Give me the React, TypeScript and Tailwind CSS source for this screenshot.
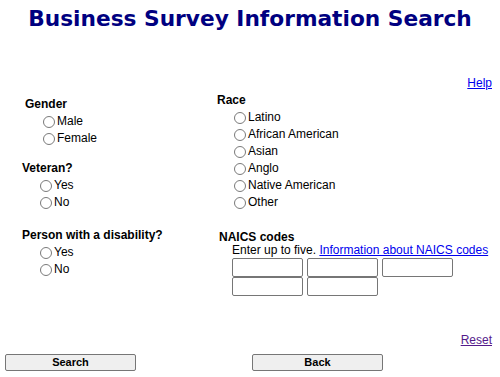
import React from "react";

function Radio({ name, label }: { name: string; label: string }) {
    return (
        <label className="flex items-center h-[17px]">
            <input
                type="radio"
                name={name}
                className="appearance-none w-[12px] h-[12px] ml-[1px] mr-[2px] shrink-0 rounded-full border border-[#7a7a7a] bg-white checked:border-[4px] checked:border-[#0075ff]"
            />
            <span>{label}</span>
        </label>
    );
}

export default function App() {
    const races = ["Latino", "African American", "Asian", "Anglo", "Native American", "Other"];

    return (
        <div className="w-[500px] h-[377px] bg-white text-black text-[12px] leading-[17px] font-['Liberation_Sans',Arial,sans-serif]">
            <h1 className="pt-[5px] text-center text-[21.7px] leading-[28px] font-bold text-[#000080] font-['DejaVu_Sans',Verdana,sans-serif]">
                Business Survey Information Search
            </h1>

            <div className="mt-[42px] flex justify-end pr-[8px]">
                <a href="#" className="underline text-[#0000ee]">Help</a>
            </div>

            <div className="flex">
                {/* left column */}
                <div className="w-[217px] pl-[22px] pt-[4px]">
                    <div className="pl-[3px]">
                        <div className="font-bold">Gender</div>
                        <div className="pl-[17px]">
                            <Radio name="gender" label="Male" />
                            <Radio name="gender" label="Female" />
                        </div>
                    </div>

                    <div className="mt-[13px]">
                        <div className="font-bold">Veteran?</div>
                        <div className="pl-[17px]">
                            <Radio name="veteran" label="Yes" />
                            <Radio name="veteran" label="No" />
                        </div>
                    </div>

                    <div className="mt-[16px]">
                        <div className="font-bold">Person with a disability?</div>
                        <div className="pl-[17px]">
                            <Radio name="disability" label="Yes" />
                            <Radio name="disability" label="No" />
                        </div>
                    </div>
                </div>

                {/* right column */}
                <div className="flex-1">
                    <div className="font-bold">Race</div>
                    <div className="pl-[16px]">
                        {races.map(r => (
                            <Radio key={r} name="race" label={r} />
                        ))}
                    </div>

                    <div className="mt-[19px] pl-[2px]">
                        <div className="font-bold leading-[14px]">NAICS codes</div>
                        <div className="pl-[13px] leading-[12px]">
                            Enter up to five.{" "}
                            <a href="#" className="underline text-[#0000ee]">Information about NAICS codes</a>
                        </div>
                        <div className="pl-[13px] mt-[2px] grid grid-cols-[71px_71px_71px] gap-x-[4px] w-max">
                            {[0, 1, 2, 3, 4].map(i => (
                                <input
                                    key={i}
                                    type="text"
                                    className="w-[71px] h-[19px] bg-white border border-[#767676] rounded-[2px]"
                                />
                            ))}
                        </div>
                    </div>
                </div>
            </div>

            <div className="mt-[36px] flex justify-end pr-[8px]">
                <a href="#" className="underline text-[#551a8b]">Reset</a>
            </div>

            <div className="mt-[5px] flex pl-[5px]">
                <button className="w-[131px] h-[17px] bg-[#efefef] border border-[#767676] rounded-[2px] text-[11px] leading-[15px] font-bold">
                    Search
                </button>
                <button className="ml-[116px] w-[131px] h-[17px] bg-[#efefef] border border-[#767676] rounded-[2px] text-[11px] leading-[15px] font-bold">
                    Back
                </button>
            </div>
        </div>
    );
}
